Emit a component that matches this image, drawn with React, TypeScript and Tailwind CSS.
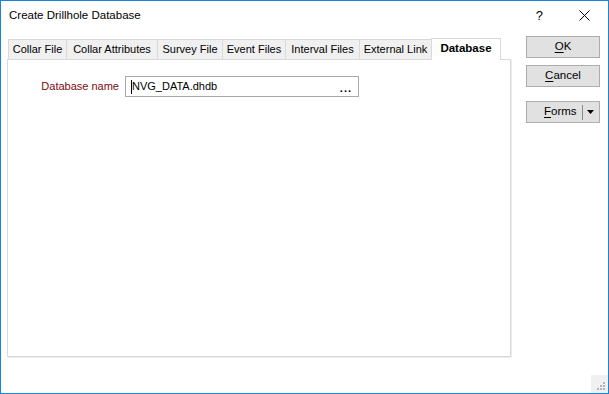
import React from 'react';

const tabs = [
  { label: 'Collar File', w: 'w-[58px]' },
  { label: 'Collar Attributes', w: 'w-[91px]' },
  { label: 'Survey File', w: 'w-[65px]' },
  { label: 'Event Files', w: 'w-[63px]' },
  { label: 'Interval Files', w: 'w-[74px]' },
  { label: 'External Link', w: 'w-[72px]' },
];

const Btn: React.FC<{ children: React.ReactNode; className?: string }> = ({ children, className = '' }) => (
  <button className={`h-[22px] w-[74px] bg-[#e1e1e1] border border-[#adadad] text-[11.5px] text-black flex items-center justify-center ${className}`}>
    {children}
  </button>
);

export default function App() {
  return (
    <div
      className="relative w-[609px] h-[394px] border border-[#1883d7] bg-white flex flex-col text-black"
      style={{ fontFamily: '"Liberation Sans", Arial, sans-serif' }}
    >
      {/* Title bar */}
      <div className="h-[29px] flex items-center pl-[8px] text-[11.5px] shrink-0">
        <span>Create Drillhole Database</span>
        <span className="ml-auto mr-[36px] text-[13px]">?</span>
        <svg width="11" height="11" viewBox="0 0 11 11" className="mr-[18px]">
          <path d="M0.5 0.5 L10.5 10.5 M10.5 0.5 L0.5 10.5" stroke="#000" strokeWidth="1" />
        </svg>
      </div>

      <div className="flex flex-1 pl-[6px]">
        {/* Tab control */}
        <div className="w-[504px] flex flex-col pt-[7px] pb-[36px]">
          <div className="flex items-end pl-px h-[22px]">
            {tabs.map((t) => (
              <div
                key={t.label}
                className={`${t.w} h-[20px] bg-[#f0f0f0] border-t border-l border-[#d9d9d9] flex items-center justify-center text-[11px] whitespace-nowrap`}
              >
                {t.label}
              </div>
            ))}
            <div className="w-[70px] h-[22px] -mb-px relative z-10 bg-white border-t border-l border-r border-[#d9d9d9] flex items-center justify-center text-[11.5px] font-bold pb-[2px]">
              Database
            </div>
          </div>
          <div className="flex-1 border border-[#d9d9d9] bg-white shadow-[1px_1px_0_#ececec]">
            <div className="flex items-center pt-[16px]">
              <span className="w-[111px] text-right text-[11px] text-[#7a0c0c]">Database name</span>
              <div className="ml-[6px] w-[234px] h-[21px] border border-[#a9a9a9] flex items-center pl-[5px] pr-[6px] text-[11px]">
                <span className="w-px h-[14px] bg-black" />
                <span>NVG_DATA.dhdb</span>
                <span className="ml-auto font-bold tracking-[1px] text-[11px] leading-none pt-[3px]">...</span>
              </div>
            </div>
          </div>
        </div>

        {/* Buttons */}
        <div className="ml-[15px] w-[74px] flex flex-col pt-[6px]">
          <Btn>
            <span><u className="underline-offset-2">O</u>K</span>
          </Btn>
          <Btn className="mt-[7px]">
            <span><u className="underline-offset-2">C</u>ancel</span>
          </Btn>
          <Btn className="mt-[14px] justify-start">
            <span className="ml-[17px]"><u className="underline-offset-2">F</u>orms</span>
            <span className="ml-[5px] w-px h-[15px] bg-[#8a8a8a]" />
            <svg width="7" height="4" viewBox="0 0 7 4" className="ml-[4px]">
              <path d="M0 0 L7 0 L3.5 4 Z" fill="#000" />
            </svg>
          </Btn>
        </div>
      </div>

      {/* Resize grip */}
      <div className="absolute right-0 bottom-0 w-[17px] h-[18px] bg-[#f0f0f0]">
        <svg width="17" height="18" viewBox="0 0 17 18">
          <g fill="#b4b4b4">
            <rect x="12" y="7" width="2" height="2" />
            <rect x="9" y="10" width="2" height="2" />
            <rect x="12" y="10" width="2" height="2" />
            <rect x="6" y="13" width="2" height="2" />
            <rect x="9" y="13" width="2" height="2" />
            <rect x="12" y="13" width="2" height="2" />
          </g>
        </svg>
      </div>
    </div>
  );
}
